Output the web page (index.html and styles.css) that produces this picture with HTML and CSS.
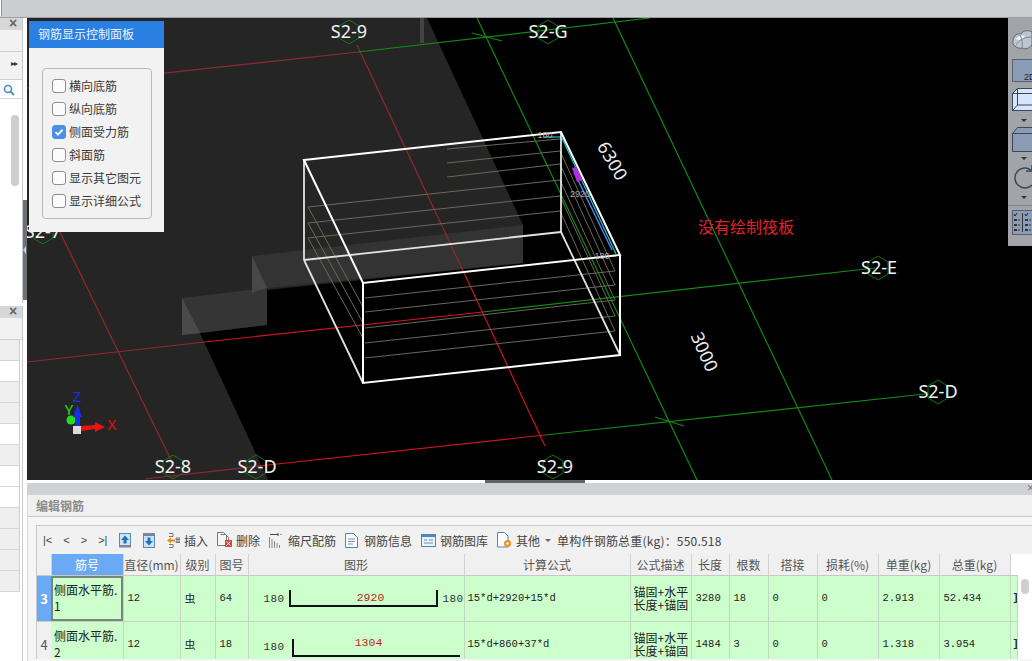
FILE: index.html
```html
<!DOCTYPE html>
<html lang="zh">
<head>
<meta charset="utf-8">
<title>编辑钢筋</title>
<link rel="stylesheet" href="styles.css">
</head>
<body>
<div class="app">
  <div class="topbar"><div class="topbar-tab"></div></div>
  <div class="workspace">
    <aside class="side">
      <div class="side-panel side-panel-top">
        <div class="side-head"><span class="close">×</span></div>
        <div class="side-blank"></div>
        <div class="side-tools"><span class="more">▸▸</span></div>
        <div class="side-search">
          <svg class="search-icon" width="12" height="12" viewBox="0 0 12 12"><circle cx="5" cy="5" r="3.5" fill="none" stroke="#3f8fc4" stroke-width="1.6"/><path d="M7.6 7.6 11 11" stroke="#5a8fb0" stroke-width="2"/></svg>
        </div>
        <div class="side-list"><div class="side-scroll"></div></div>
      </div>
      <div class="side-panel side-panel-bottom">
        <div class="side-head"><span class="close">×</span></div>
        <div class="side-blank"></div>
        <div class="side-rows">
          <div class="side-row grey"></div>
          <div class="side-row"></div>
          <div class="side-row grey"></div>
          <div class="side-row grey"></div>
          <div class="side-row"></div>
          <div class="side-row grey"></div>
          <div class="side-row"></div>
          <div class="side-row"></div>
          <div class="side-row grey"></div>
          <div class="side-row grey"></div>
          <div class="side-row grey"></div>
          <div class="side-row grey"></div>
        </div>
      </div>
      <div class="splitter"><span class="splitter-arrow"></span></div>
    </aside>

    <main class="content">
      <section class="viewport">
        <svg class="scene" width="1005" height="462" viewBox="27 18 1005 462">
          <rect x="27" y="18" width="1005" height="462" fill="#000"/>
          <polygon points="27,18 427,18 523,225 523,263 267,290 267,325 200,333 268,480 27,480" fill="#252525"/>
          <rect x="420" y="18" width="4" height="25" fill="#444"/>
          <polygon points="252,256 523,225 523,263 267,288 252,293" fill="#333"/>
          <polygon points="182,298 267,288 267,325 200,333 182,335" fill="#353535"/>
          <polygon points="252,256 267,288 252,293" fill="#484848"/>
          <polygon points="182,298 200,333 182,335" fill="#4a4a4a"/>

          <g class="line-dim">
            <line x1="27" y1="88" x2="358" y2="52"/>
            <line x1="60" y1="232" x2="172" y2="462"/>
            <line x1="357" y1="45" x2="465" y2="275"/>
            <line x1="27" y1="362" x2="205" y2="342"/>
            <line x1="145" y1="479" x2="268" y2="465"/>
          </g>
          <g class="line-red">
            <line x1="205" y1="342" x2="483" y2="312"/>
            <line x1="465" y1="275" x2="545" y2="446"/>
            <line x1="268" y1="465" x2="545" y2="435"/>
          </g>
          <g class="line-green">
            <line x1="358" y1="52" x2="650" y2="18"/>
            <line x1="472" y1="33" x2="502" y2="41"/>
            <line x1="477" y1="18" x2="697" y2="480"/>
            <line x1="613" y1="18" x2="832" y2="480"/>
            <line x1="483" y1="312" x2="875" y2="268"/>
            <line x1="545" y1="435" x2="925" y2="394"/>
            <line x1="655" y1="417" x2="684" y2="426"/>
          </g>
          <g class="hex">
            <polygon points="349,20 359,26 359,38 349,44 339,38 339,26"/>
            <polygon points="548,20 558,26 558,38 548,44 538,38 538,26"/>
            <polygon points="878,256 888,262 888,274 878,280 868,274 868,262"/>
            <polygon points="938,380 948,386 948,398 938,404 928,398 928,386"/>
            <polygon points="173,455 183,461 183,473 173,479 163,473 163,461"/>
            <polygon points="256,455 266,461 266,473 256,479 246,473 246,461"/>
            <polygon points="553,455 563,461 563,473 553,479 543,473 543,461"/>
            <polygon points="43,220 53,226 53,238 43,244 33,238 33,226"/>
          </g>

          <g class="rebar">
            <line x1="447" y1="149" x2="560" y2="139"/>
            <line x1="447" y1="163" x2="560" y2="151"/>
            <line x1="447" y1="177" x2="560" y2="164"/>
            <line x1="308" y1="207" x2="560" y2="180"/>
            <line x1="308" y1="223" x2="560" y2="196"/>
            <line x1="308" y1="238" x2="560" y2="211"/>
            <line x1="308" y1="207" x2="363" y2="307"/>
            <line x1="308" y1="223" x2="363" y2="323"/>
            <line x1="308" y1="238" x2="363" y2="338"/>
            <line x1="365" y1="298" x2="615" y2="271"/>
            <line x1="365" y1="312" x2="615" y2="285"/>
            <line x1="365" y1="328" x2="615" y2="300"/>
            <line x1="365" y1="343" x2="615" y2="316"/>
            <line x1="365" y1="358" x2="615" y2="331"/>
            <line x1="560" y1="151" x2="615" y2="271"/>
            <line x1="560" y1="164" x2="615" y2="285"/>
            <line x1="560" y1="180" x2="615" y2="300"/>
            <line x1="560" y1="196" x2="615" y2="316"/>
            <line x1="560" y1="211" x2="615" y2="331"/>
          </g>
          <line class="cyan" x1="543" y1="137" x2="561" y2="137"/>
          <line class="cyan" x1="562" y1="138" x2="616" y2="254"/>
          <line class="cyan" x1="604" y1="257" x2="616" y2="256"/>
          <line class="blue" x1="574" y1="172" x2="612" y2="250"/>
          <polygon points="572,168 576,167 583,180 577,182" fill="#b030e0"/>

          <g class="box-back">
            <line x1="304" y1="260" x2="561" y2="232"/>
            <line x1="304" y1="160" x2="304" y2="260"/>
            <line x1="304" y1="260" x2="363" y2="383"/>
            <line x1="561" y1="232" x2="620" y2="355"/>
          </g>
          <g class="box-front">
            <polygon points="304,160 561,132 620,255 363,283"/>
            <polyline points="363,283 363,383 620,355 620,255"/>
            <line x1="561" y1="132" x2="561" y2="232"/>
          </g>

          <text class="tiny" x="545" y="138" text-anchor="middle">180</text>
          <text class="tiny" x="580" y="197" text-anchor="middle">2920</text>
          <text class="tiny" x="602" y="259" text-anchor="middle">180</text>

          <g class="grid-label" text-anchor="middle">
            <text x="349" y="38">S2-9</text>
            <text x="548" y="38">S2-G</text>
            <text x="879" y="274">S2-E</text>
            <text x="938" y="398">S2-D</text>
            <text x="173" y="473">S2-8</text>
            <text x="257" y="473">S2-D</text>
            <text x="555" y="473">S2-9</text>
            <text x="43" y="238">S2-7</text>
          </g>
          <text class="dim" text-anchor="middle" transform="translate(612 161) rotate(60)" y="6">6300</text>
          <text class="dim" text-anchor="middle" transform="translate(704 352) rotate(66)" y="6">3000</text>
          <text class="warn" x="746" y="233" text-anchor="middle">没有绘制筏板</text>

          <g class="triad">
            <circle cx="71" cy="420" r="4.5" fill="#22dd22"/>
            <rect x="75" y="414" width="5" height="13" fill="#1530e8"/>
            <polygon points="77.5,405 82,417 73,417" fill="#1530e8"/>
            <polygon points="81,426 95,425 95,422 105,427 95,432 95,429 81,431" fill="#ee1111"/>
            <rect x="73" y="426" width="8" height="8" fill="#dcdcdc"/>
            <text x="77" y="402" fill="#1530e8" text-anchor="middle">Z</text>
            <text x="69" y="415" fill="#22dd22" text-anchor="middle">Y</text>
            <text x="112" y="430" fill="#e01010" text-anchor="middle">X</text>
          </g>
        </svg>

        <div class="rebar-panel">
          <div class="rebar-panel-title">钢筋显示控制面板</div>
          <div class="rebar-panel-body">
            <div class="check-group">
              <div class="check-row"><span class="check"></span>横向底筋</div>
              <div class="check-row"><span class="check"></span>纵向底筋</div>
              <div class="check-row"><span class="check on"><svg width="14" height="14" viewBox="0 0 14 14"><path d="M3.5 7.2 6 9.6 10.6 4.6" fill="none" stroke="#fff" stroke-width="1.8"/></svg></span>侧面受力筋</div>
              <div class="check-row"><span class="check"></span>斜面筋</div>
              <div class="check-row"><span class="check"></span>显示其它图元</div>
              <div class="check-row"><span class="check"></span>显示详细公式</div>
            </div>
          </div>
        </div>

        <div class="view-tools">
          <svg width="24" height="228" viewBox="1008 18 24 228">
            <rect x="1008" y="18" width="24" height="228" fill="#a1a5a9"/>
            <path d="M1013 44c-1-7 3-11 8-10 2-4 8-4 11-2v13c-3 3-6 5-10 3-3 1-7-1-9-4z" fill="#bcc6d0" stroke="#5f6670"/>
            <path d="M1016 39c2-3 6-4 9-3-2 3-6 5-9 3z" fill="#f4f7fa"/>
            <path d="M1016 45c3-5 8-8 16-8M1020 35c2 4 3 9 2 13" fill="none" stroke="#7d8794"/>
            <rect x="1012.5" y="59.5" width="22" height="22" fill="#8b9cb7" stroke="#58606c"/>
            <text class="tool-2d" x="1024" y="80">2D</text>
            <path d="M1012.5 93.5l5-5H1036v22h-23.5z" fill="#d7e5fb" stroke="#3d4654"/>
            <path d="M1012.5 93.5H1036M1017.5 88.5V105M1012.5 110.500l5-5.500H1036" fill="none" stroke="#3d4654"/>
            <path d="M1021 119h6l-3 3z" fill="#333"/>
            <path d="M1012.5 133.500l5-6H1036v24h-23.500z" fill="#8b9cb7" stroke="#3d4654"/>
            <path d="M1012.5 133.500H1036" fill="none" stroke="#3d4654"/>
            <path d="M1021 157h6l-3 3z" fill="#333"/>
            <path d="M1031 170a10 10 0 1 0 1 15M1032 165v6h-6" fill="none" stroke="#3d4654" stroke-width="1.5"/>
            <path d="M1021 196h6l-3 3z" fill="#333"/>
            <path d="M1008 205.500H1032" stroke="#83878b"/>
            <rect x="1012.5" y="210.500" width="22" height="24" fill="#8b9cb7" stroke="#58606c"/>
            <path d="M1014 214l1 2 2-3M1025 214l1 2 2-3" fill="none" stroke="#222"/>
            <path d="M1014 219h3v2h-3zM1014 224h3v2h-3zM1014 229h3v2h-3zM1025 219h3v2h-3zM1025 224h3v2h-3zM1025 229h3v2h-3z" fill="#333"/>
            <path d="M1018 220h2M1018 225h2M1018 230h2M1029 220h2M1029 225h2M1029 230h2M1022.5 213v19" stroke="#333"/>
          </svg>
        </div>
      </section>

      <section class="editor">
        <div class="editor-handle-row"><span class="editor-handle"></span></div>
        <div class="editor-strip"><span class="editor-x">×</span></div>
        <div class="editor-title">编辑钢筋</div>
        <div class="editor-body">
          <div class="grid-box">
            <div class="toolbar">
              <div class="nav"><span>|&lt;</span><span>&lt;</span><span>&gt;</span><span>&gt;|</span></div>
              <svg class="ico" width="12" height="15" viewBox="0 0 12 15"><rect x=".5" y=".5" width="11" height="12" fill="#cfe3f7" stroke="#5b89b5"/><path d="M6 2.5 10 7H7.500v3.500h-3V7H2z" fill="#2472b8"/><rect y="12" width="12" height="2.500" fill="#7d8a96"/></svg>
              <svg class="ico" width="12" height="15" viewBox="0 0 12 15"><rect y="0" width="12" height="2.500" fill="#7d8a96"/><rect x=".5" y="2.500" width="11" height="12" fill="#cfe3f7" stroke="#5b89b5"/><path d="M6 12.500 2 8h2.500V4.500h3V8H10z" fill="#2472b8"/></svg>
              <div class="tool g4"><svg width="13" height="15" viewBox="0 0 13 15"><path d="M2 .5h4v3H2M2 11.500h4v3H2M9 5h4v1.500H9zM9 8h4v1.500H9z" fill="none" stroke="#777"/><path d="M0 7.500 4 4.500v2h4v2H4v2z" fill="#e88a1a"/></svg>插入</div>
              <div class="tool g3"><svg width="16" height="16" viewBox="0 0 16 16"><path d="M.5.500h6l3 3v10h-9z M3.500 2.500h5l3 3v9" fill="#f5f5f5" stroke="#777"/><rect x="8" y="8" width="7" height="7" fill="#d9443a"/><path d="m9.500 9.500 4 4m0-4-4 4" stroke="#fff"/></svg>删除</div>
              <div class="tool g6"><svg width="13" height="15" viewBox="0 0 13 15"><path d="M.5 4v11M3 6v9M5.500 8v7M8 10v5M10.500 12v3" stroke="#8a8a8a"/><path d="M1 1.500h8M9 0v3M12 1v1" stroke="#444"/></svg>缩尺配筋</div>
              <div class="tool g6"><svg width="13" height="15" viewBox="0 0 13 15"><path d="M.5.500h8l4 4v10H.5z" fill="#fff" stroke="#4b86c4"/><path d="M3 6h7M3 8.500h7M3 11h5" stroke="#7b8fa5"/></svg>钢筋信息</div>
              <div class="tool g4"><svg width="15" height="13" viewBox="0 0 15 13"><rect x=".5" y=".5" width="14" height="12" fill="#eaf2fb" stroke="#4b86c4"/><rect x=".5" y=".5" width="14" height="2.500" fill="#4b86c4"/><path d="M3 6h3M3 9h9M8 6h4" stroke="#7b8fa5"/></svg>钢筋图库</div>
              <div class="tool g4"><svg width="15" height="16" viewBox="0 0 15 16"><path d="M.5.500h7l3.500 3.500v11H.5z" fill="#fff" stroke="#4b86c4"/><circle cx="10.500" cy="11.500" r="3.500" fill="#f0901e"/><circle cx="10.500" cy="11.500" r="1.300" fill="#fff"/></svg>其他</div>
              <span class="caret"></span>
              <div class="total">单构件钢筋总重(kg)：550.518</div>
            </div>
            <div class="table-wrap">
              <table class="bars">
                <colgroup>
                  <col class="c-no"><col class="c-name"><col class="c-dia"><col class="c-grade"><col class="c-fig"><col class="c-shape"><col class="c-calc"><col class="c-desc"><col class="c-len"><col class="c-count"><col class="c-lap"><col class="c-loss"><col class="c-unit"><col class="c-sum"><col class="c-end">
                </colgroup>
                <thead>
                  <tr>
                    <th></th><th class="sel">筋号</th><th>直径(mm)</th><th>级别</th><th>图号</th><th>图形</th><th>计算公式</th><th>公式描述</th><th>长度</th><th>根数</th><th>搭接</th><th>损耗(%)</th><th>单重(kg)</th><th>总重(kg)</th><th class="blank"></th>
                  </tr>
                </thead>
                <tbody>
                  <tr>
                    <td class="rn active">3</td>
                    <td class="name focus">侧面水平筋.<br>1</td>
                    <td class="num">12</td>
                    <td class="grade">虫</td>
                    <td class="num">64</td>
                    <td class="shape-cell"><div class="shape"><span class="dimv">180</span><span class="bar both">2920</span><span class="dimv">180</span></div></td>
                    <td class="num calc">15*d+2920+15*d</td>
                    <td class="desc">锚固+水平<br>长度+锚固</td>
                    <td class="num">3280</td>
                    <td class="num">18</td>
                    <td class="num">0</td>
                    <td class="num">0</td>
                    <td class="num">2.913</td>
                    <td class="num">52.434</td>
                    <td class="num end">]</td>
                  </tr>
                  <tr>
                    <td class="rn">4</td>
                    <td class="name">侧面水平筋.<br>2</td>
                    <td class="num">12</td>
                    <td class="grade">虫</td>
                    <td class="num">18</td>
                    <td class="shape-cell"><div class="shape second"><span class="dimv">180</span><span class="bar single">1304</span></div></td>
                    <td class="num calc">15*d+860+37*d</td>
                    <td class="desc">锚固+水平<br>长度+锚固</td>
                    <td class="num">1484</td>
                    <td class="num">3</td>
                    <td class="num">0</td>
                    <td class="num">0</td>
                    <td class="num">1.318</td>
                    <td class="num">3.954</td>
                    <td class="num end">]</td>
                  </tr>
                </tbody>
              </table>
              <div class="table-scroll"><span class="table-thumb"></span></div>
            </div>
          </div>
        </div>
      </section>
    </main>
  </div>
</div>
</body>
</html>
```

FILE: styles.css
```css
* { box-sizing: border-box; }
html, body { margin: 0; height: 100%; background: #fff; }
body { font-family: "Noto Sans CJK SC", "Noto Sans", sans-serif; font-size: 12px; color: #333; overflow: hidden; }
.app { width: 1032px; height: 661px; display: flex; flex-direction: column; overflow: hidden; }

.topbar { height: 18px; flex: none; background: #cbcdd1; border-bottom: 1px solid #9a9da2; }
.topbar-tab { width: 2px; height: 16px; background: #fff; border-right: 1px solid #999; }
.workspace { flex: 1; display: flex; min-height: 0; }

/* left column */
.side { position: relative; width: 27px; flex: none; background: #fff; display: flex; flex-direction: column; }
.side-panel { width: 23px; border-right: 1px solid #c9c9c9; }
.side-panel-top { height: 285px; display: flex; flex-direction: column; }
.side-panel-bottom { margin-top: 3px; flex: 1; }
.side-head { height: 12px; background: #d6d7d9; position: relative; }
.close { position: absolute; left: 9px; top: -4px; font-size: 14px; line-height: 18px; color: #666; font-family: "Liberation Sans", sans-serif; font-weight: 700; }
.side-blank { height: 22px; background: #f2f2f2; border-bottom: 1px solid #d0d0d0; }
.side-tools { height: 28px; background: #f2f2f2; border-bottom: 1px solid #d0d0d0; position: relative; }
.more { position: absolute; left: 11px; top: 7px; font-size: 8px; letter-spacing: -1px; color: #333; font-family: "DejaVu Sans", sans-serif; }
.side-search { height: 19px; background: #fff; border-bottom: 1px solid #d8d8d8; padding: 4px 0 0 3px; }
.search-icon { display: block; }
.side-list { flex: 1; position: relative; background: #fff; }
.side-scroll { position: absolute; left: 11px; top: 16px; width: 8px; height: 71px; background: #cdcdcd; border-radius: 4px; }
.side-rows { display: flex; flex-direction: column; border-right: 1px solid #d0d0d0; width: 20px; }
.side-row { height: 21px; background: #fff; border-bottom: 1px solid #d5d5d5; }
.side-row.grey { background: #efefef; }
.splitter { position: absolute; left: 23px; top: 182px; width: 4px; height: 100px; background: #6c7077; }
.splitter-arrow { position: absolute; left: 0; top: 46px; border: 4px solid transparent; border-left: 0; border-right: 3px solid #c8cace; }

/* viewport */
.content { flex: 1; min-width: 0; display: flex; flex-direction: column; }
.viewport { position: relative; height: 462px; flex: none; overflow: hidden; background: #000; }
.scene { display: block; }
.scene line { stroke-width: 1.2; }
.line-dim line { stroke: #93282e; }
.line-red line { stroke: #cf161e; }
.line-green line { stroke: #128a18; }
.hex polygon { fill: none; stroke: #0f7516; stroke-width: 1; }
.rebar line { stroke: #6d6857; stroke-width: 1; }
.scene .cyan { stroke: #18c8c8; stroke-width: 1.2; }
.scene .blue { stroke: #5a80ff; stroke-width: 1.4; }
.scene .box-back line { stroke: #e2e2e2; stroke-width: 1.8; }
.box-front polygon, .box-front polyline { fill: none; stroke: #fff; stroke-width: 2; }
.scene .box-front line { stroke: #fff; stroke-width: 1.6; }
.grid-label text { fill: #f2f2f2; font-family: "Noto Sans", sans-serif; font-size: 18px; }
.dim { fill: #eee; font-family: "Noto Sans", sans-serif; font-size: 18px; }
.warn { fill: #e3202c; font-family: "Noto Sans CJK SC", sans-serif; font-size: 16px; }
.tiny { fill: #aaa; font-family: "Liberation Sans", sans-serif; font-size: 9px; }
.triad text { font-family: "Noto Sans", sans-serif; font-size: 15px; }
.tool-2d { fill: #222; font-family: "Liberation Sans", sans-serif; font-size: 9px; }

/* floating control panel */
.rebar-panel { position: absolute; left: 2px; top: 3px; width: 135px; height: 211px; background: #f2f2f2; display: flex; flex-direction: column; }
.rebar-panel-title { height: 27px; background: #2a7fe2; color: #eaf3ff; padding-left: 9px; line-height: 26px; font-size: 12px; }
.rebar-panel-body { flex: 1; padding: 20px 12px 13px 13px; }
.check-group { height: 151px; border: 1px solid #b9b9b9; border-radius: 4px; padding: 5px 0 0 9px; display: flex; flex-direction: column; }
.check-row { height: 23px; display: flex; align-items: center; gap: 2px; font-size: 12px; color: #3a3a3a; }
.check { width: 14px; height: 14px; flex: none; border: 1px solid #8f8f8f; border-radius: 3px; background: #fbfbfb; display: block; margin-right: 1px; }
.check svg { display: block; margin: -1px; }
.check.on { background: #4a90e6; border-color: #4a90e6; }

.view-tools { position: absolute; right: 0; top: 0; width: 24px; height: 228px; overflow: hidden; }
.view-tools svg { display: block; }

/* editor */
.editor { flex: 1; min-height: 0; background: #fff; display: flex; flex-direction: column; }
.editor-handle-row { height: 3px; flex: none; position: relative; background: #fff; }
.editor-handle { position: absolute; left: 458px; top: 0; width: 100px; height: 3px; background: #5e6269; }
.editor-strip { height: 12px; flex: none; background: #cfd1d5; position: relative; }
.editor-x { position: absolute; right: -2px; top: -3px; font-size: 12px; line-height: 16px; color: #777; font-family: "Liberation Sans", sans-serif; }
.editor-title { height: 22px; flex: none; background: #f0f0f0; border-bottom: 1px solid #c8c8c8; border-left: 1px solid #ddd; padding-left: 8px; line-height: 21px; font-size: 12px; font-weight: 700; color: #8b8b8b; }
.editor-body { flex: 1; min-height: 0; padding: 8px 0 0 8px; background: #f6f6f6; border-left: 1px solid #ddd; }
.grid-box { border: 1px solid #c8c8c8; border-right: 0; border-bottom: 0; background: #fff; }
.toolbar { height: 28px; background: #f1f1f1; display: flex; align-items: center; gap: 9px; padding-left: 6px; color: #444; font-size: 12px; }
.nav { display: flex; gap: 11px; width: 65px; margin-right: 2px; font-family: "Liberation Sans", sans-serif; font-size: 11px; color: #444; }
.ico { display: block; margin-right: 3px; flex: none; }
.tool { display: flex; align-items: center; gap: 5px; white-space: nowrap; }
.tool.g3 { gap: 3px; }
.tool.g4 { gap: 4px; }
.tool.g6 { gap: 6px; }
.tool svg { display: block; flex: none; }
.caret { width: 0; height: 0; margin-left: -4px; border: 3px solid transparent; border-top: 3px solid #666; border-bottom: 0; flex: none; }
.total { white-space: nowrap; margin-left: -3px; letter-spacing: .2px; }

.table-wrap { position: relative; height: 105px; overflow: hidden; display: flex; }
.bars { width: 980px; table-layout: fixed; border-collapse: collapse; flex: none; }
.c-no { width: 14px; } .c-name { width: 72px; } .c-dia { width: 57px; } .c-grade { width: 35px; } .c-fig { width: 33px; }
.c-shape { width: 216px; } .c-calc { width: 166px; } .c-desc { width: 61px; } .c-len { width: 38px; } .c-count { width: 39px; }
.c-lap { width: 49px; } .c-loss { width: 61px; } .c-unit { width: 61px; } .c-sum { width: 71px; } .c-end { width: 7px; }
.bars th { height: 21px; padding: 0; background: #f0f0f0; border-right: 1px solid #d2d2d2; border-bottom: 1px solid #c8c8c8; font-weight: 400; font-size: 12px; color: #555; white-space: nowrap; }
.bars th.sel { background: #6aa9f4; color: #fff; }
.bars th.blank { background: #fff; border-right: 0; }
.bars td { height: 46px; padding: 0 0 0 3px; background: #ccffcc; border-right: 1px solid #bfd8bf; border-bottom: 1px solid #bfd8bf; color: #222; vertical-align: middle; overflow: hidden; }
.bars td.rn { padding: 0; background: #f0f0f0; text-align: center; font-size: 13px; color: #555; border-right: 0; }
.bars td.rn.active { background: #6aa9f4; color: #fff; font-weight: 700; }
.bars td.name { font-size: 12px; line-height: 16px; white-space: nowrap; padding-left: 3px; }
.bars td.focus { box-shadow: inset 0 0 0 2px #79877a; }
.bars td.num { font-family: "Liberation Mono", monospace; font-size: 10.5px; padding-left: 4px; white-space: nowrap; }
.bars td.calc { padding-left: 3px; }
.bars td.grade { padding-left: 4px; font-size: 11px; }
.bars td.desc { font-size: 12px; line-height: 13px; padding: 0 0 0 3px; white-space: nowrap; color: #222; }
.bars td.end { padding-left: 2px; font-weight: 700; }
.shape { display: flex; align-items: flex-end; padding-left: 12px; gap: 4px; height: 18px; }
.shape.second { padding-left: 14px; gap: 7px; height: 18px; margin-top: 8px; }
.shape.second .dimv { margin-bottom: 2px; margin-left: -2px; }
.dimv { font-family: "Liberation Mono", monospace; font-size: 11px; letter-spacing: .4px; color: #333; line-height: 15px; }
.bar { display: block; border-left: 2px solid #111; border-bottom: 2px solid #111; color: #c41c1c; font-family: "Liberation Mono", monospace; font-size: 11.5px; text-align: center; line-height: 15px; }
.bar.both { width: 150px; height: 17px; border-right: 2px solid #111; padding-left: 14px; }
.bar.single { width: 168px; height: 18px; padding-right: 16px; line-height: 8px; }
.table-scroll { flex: 1; position: relative; background: #fff; }
.table-thumb { position: absolute; left: 3px; top: 25px; width: 8px; height: 15px; background: #cfcfcf; border-radius: 4px; }
```
